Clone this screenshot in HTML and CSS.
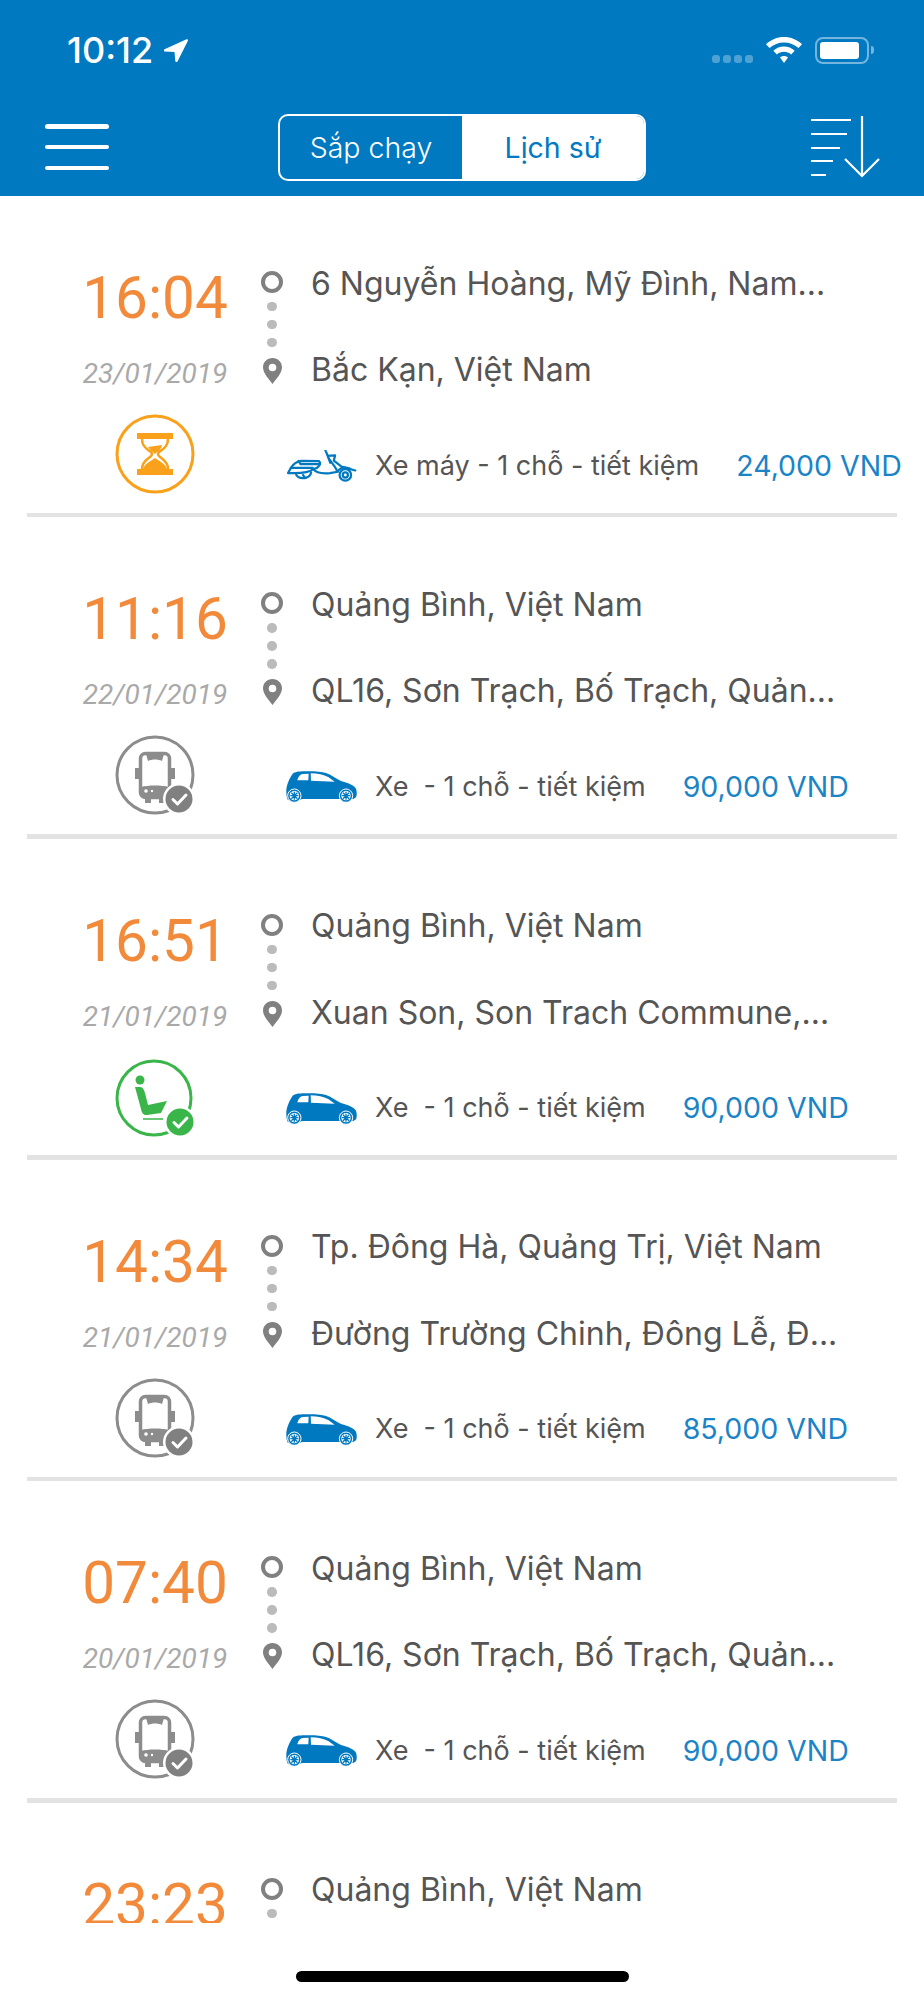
FILE: index.html
```html
<!DOCTYPE html>
<html lang="vi">
<head>
<meta charset="utf-8">
<title>Lịch sử</title>
<link rel="stylesheet" href="styles.css">
</head>
<body>
<svg class="defs" aria-hidden="true">
  <symbol id="pin" viewBox="0 0 19 26"><path fill="#808080" fill-rule="evenodd" d="M9.5 0C4.2 0 0 4 0 9.3 0 15.500 6.200 21.500 9.500 26 12.800 21.500 19 15.500 19 9.300 19 4 14.800 0 9.500 0Zm0 5.700a3.800 3.800 0 1 1 0 7.600 3.800 3.800 0 0 1 0-7.600Z"/></symbol>
  <symbol id="car" viewBox="0 0 213 94">
    <path fill="#0079C1" d="M1 62C0 46 8 25 18 10 24 3 32 1 50 0 80-1 105 0 120 5 135 10 150 22 165 29 185 34 205 42 210 52 213 60 213 72 210 78L202 83H157L150 83H48L42 85H5C2 78 1 70 1 62Z"/>
    <path fill="#fff" d="M34 27C36 18 42 9 50 8L68 7 67 27ZM74 6C95 6 112 10 128 18L146 31 75 28Z"/>
    <g fill="#0079C1" stroke="#fff" stroke-width="3"><circle cx="25" cy="73" r="20"/><circle cx="180" cy="73" r="20"/></g>
    <g fill="#fff"><circle cx="25" cy="73" r="14"/><circle cx="180" cy="73" r="14"/></g>
    <g fill="none" stroke="#0079C1" stroke-width="4"><path d="M25 61V85M13 73H37M16 64 34 82M34 64 16 82"/><path d="M180 61V85M168 73H192M171 64 189 82M189 64 171 82"/></g>
  </symbol>
  <symbol id="scooter" viewBox="0 0 215 100">
    <g fill="none" stroke="#0079C1" stroke-width="7" stroke-linecap="round" stroke-linejoin="round">
      <path d="M3 72 12 56C20 42 30 36 45 34L100 35C107 42 100 56 82 60 70 70 45 74 3 72Z"/>
      <path d="M36 34 42 44H98M12 56H80"/>
      <path d="M28 74C28 92 72 94 75 70"/>
      <path d="M82 60C92 74 112 74 134 72L158 68C148 48 138 38 130 26"/>
      <path d="M120 2 127 18 150 17 146 33 170 52 213 64"/>
      <path d="M127 18 135 40"/>
      <path d="M158 68C162 56 178 52 196 58"/>
      <circle cx="182" cy="78" r="18"/><circle cx="182" cy="78" r="8"/>
      <path d="M50 78 56 88"/>
    </g>
  </symbol>
  <symbol id="status-wait" viewBox="0 0 80 80">
    <circle cx="40" cy="40" r="38" fill="none" stroke="#F9A11B" stroke-width="3"/>
    <path fill="#F9A11B" d="M22 19H58V25H22ZM22 55H58V61H22Z"/>
    <path fill="none" stroke="#F9A11B" stroke-width="2.500" d="M27 25C27 36 37 36 37 40 37 44 27 45 27 55M53 25C53 36 43 36 43 40 43 44 53 45 53 55"/>
    <path fill="#F9A11B" d="M33 33 47 31C46 36 42 38 40 40 38 38 35 36 33 33ZM28 55C30 49 36 47 40 44 44 47 50 49 52 55Z"/>
  </symbol>
  <symbol id="status-bus" viewBox="0 0 80 80">
    <circle cx="40" cy="40" r="38" fill="none" stroke="#8C8C8C" stroke-width="3"/>
    <path fill="#8C8C8C" d="M20 33H24V44H20ZM56 33H60V44H56ZM30 62H36V68H30ZM44 62H50V68H44Z"/>
    <rect x="25.500" y="18.500" width="29" height="44" rx="5" fill="#fff" stroke="#8C8C8C" stroke-width="3.500"/>
    <path fill="#8C8C8C" d="M31 19H49L47 26C43 24 37 24 33 26ZM26 52C33 50 47 50 54 52V62H26Z"/>
    <circle cx="31" cy="56" r="1.800" fill="#fff"/><circle cx="37" cy="56" r="1.200" fill="#fff"/>
    <circle cx="64" cy="64" r="16" fill="#fff"/><circle cx="64" cy="64" r="13.500" fill="#808080"/>
    <path fill="none" stroke="#fff" stroke-width="3" stroke-linecap="round" stroke-linejoin="round" d="M58 64.500 62.500 69 71 60"/>
  </symbol>
  <symbol id="status-seat" viewBox="0 0 80 80">
    <circle cx="39" cy="41" r="37" fill="none" stroke="#39B54A" stroke-width="3"/>
    <circle cx="25" cy="23" r="4.500" fill="#39B54A"/>
    <path fill="#39B54A" d="M20 30H25C28 30 29 33 30 36L33 48 52 44 46 56 32 58C28 58 27 56 26 52Z"/>
    <path fill="none" stroke="#39B54A" stroke-width="1.500" d="M28 62H48"/>
    <circle cx="65" cy="65" r="16" fill="#fff"/><circle cx="65" cy="65" r="13.500" fill="#39B54A"/>
    <path fill="none" stroke="#fff" stroke-width="3" stroke-linecap="round" stroke-linejoin="round" d="M59 65.500 63.500 70 72 61"/>
  </symbol>
</svg>

<div class="phone">
  <header class="appbar">
    <div class="statusbar">
      <div class="clock">
        <span class="clock-time">10:12</span>
        <svg class="clock-arrow" viewBox="0 0 24 23"><path fill="#fff" d="M0 10.500 22 .5C23.500 0 24.300.8 23.800 2L13.500 22.500C12.900 23.500 11.500 23.300 11.300 22L10.500 13 1 12.600C-.2 12.500-.5 11 0 10.500Z"/></svg>
      </div>
      <div class="status-right">
        <div class="signal"><i></i><i></i><i></i><i></i></div>
        <svg class="wifi" viewBox="0 0 36 26"><path fill="#fff" d="M18 0C25 0 31 2.700 36 7.200L32.500 11C28.500 7.400 23.500 5.400 18 5.400S7.500 7.400 3.500 11L0 7.200C5 2.700 11 0 18 0ZM18 9.500C22 9.500 25.800 11 28.700 13.700L25.200 17.500C23.200 15.700 20.700 14.800 18 14.800S12.800 15.700 10.800 17.500L7.300 13.700C10.200 11 14 9.500 18 9.500ZM18 19C19.500 19 20.800 19.500 22 20.500L18 26 14 20.500C15.200 19.500 16.500 19 18 19Z"/></svg>
        <div class="battery"><div class="battery-fill"></div></div>
        <div class="battery-nub"></div>
      </div>
    </div>
    <nav class="toolbar">
      <button class="menu-btn" aria-label="Menu"><i></i><i></i><i></i></button>
      <div class="segment">
        <div class="segment-item">Sắp chạy</div>
        <div class="segment-item active">Lịch sử</div>
      </div>
      <svg class="sort-icon" viewBox="0 0 70 62"><g fill="none" stroke="#fff" stroke-width="2.200"><path d="M0 4H40M0 18H36M0 32H29M0 45H22M0 59H15"/><path d="M51 0V60M34 43 51 60 68 43"/></g></svg>
    </nav>
  </header>

  <main class="trips">
    <article class="trip">
      <div class="when"><div class="time">16:04</div><div class="date">23/01/2019</div><svg class="status"><use href="#status-wait"/></svg></div>
      <div class="detail">
        <div class="stop"><span class="ring"></span><span class="place">6 Nguyễn Hoàng, Mỹ Đình, Nam...</span></div>
        <div class="dots"><i></i><i></i><i></i></div>
        <div class="stop"><svg class="pin"><use href="#pin"/></svg><span class="place">Bắc Kạn, Việt Nam</span></div>
        <div class="meta"><svg class="vehicle"><use href="#scooter"/></svg><span class="kind">Xe máy - 1 chỗ - tiết kiệm</span><span class="price">24,000 VND</span></div>
      </div>
    </article>
    <article class="trip">
      <div class="when"><div class="time">11:16</div><div class="date">22/01/2019</div><svg class="status"><use href="#status-bus"/></svg></div>
      <div class="detail">
        <div class="stop"><span class="ring"></span><span class="place">Quảng Bình, Việt Nam</span></div>
        <div class="dots"><i></i><i></i><i></i></div>
        <div class="stop"><svg class="pin"><use href="#pin"/></svg><span class="place">QL16, Sơn Trạch, Bố Trạch, Quản...</span></div>
        <div class="meta"><svg class="vehicle"><use href="#car"/></svg><span class="kind">Xe &nbsp;- 1 chỗ - tiết kiệm</span><span class="price">90,000 VND</span></div>
      </div>
    </article>
    <article class="trip">
      <div class="when"><div class="time">16:51</div><div class="date">21/01/2019</div><svg class="status"><use href="#status-seat"/></svg></div>
      <div class="detail">
        <div class="stop"><span class="ring"></span><span class="place">Quảng Bình, Việt Nam</span></div>
        <div class="dots"><i></i><i></i><i></i></div>
        <div class="stop"><svg class="pin"><use href="#pin"/></svg><span class="place">Xuan Son, Son Trach Commune,...</span></div>
        <div class="meta"><svg class="vehicle"><use href="#car"/></svg><span class="kind">Xe &nbsp;- 1 chỗ - tiết kiệm</span><span class="price">90,000 VND</span></div>
      </div>
    </article>
    <article class="trip">
      <div class="when"><div class="time">14:34</div><div class="date">21/01/2019</div><svg class="status"><use href="#status-bus"/></svg></div>
      <div class="detail">
        <div class="stop"><span class="ring"></span><span class="place">Tp. Đông Hà, Quảng Trị, Việt Nam</span></div>
        <div class="dots"><i></i><i></i><i></i></div>
        <div class="stop"><svg class="pin"><use href="#pin"/></svg><span class="place">Đường Trường Chinh, Đông Lễ, Đ...</span></div>
        <div class="meta"><svg class="vehicle"><use href="#car"/></svg><span class="kind">Xe &nbsp;- 1 chỗ - tiết kiệm</span><span class="price">85,000 VND</span></div>
      </div>
    </article>
    <article class="trip">
      <div class="when"><div class="time">07:40</div><div class="date">20/01/2019</div><svg class="status"><use href="#status-bus"/></svg></div>
      <div class="detail">
        <div class="stop"><span class="ring"></span><span class="place">Quảng Bình, Việt Nam</span></div>
        <div class="dots"><i></i><i></i><i></i></div>
        <div class="stop"><svg class="pin"><use href="#pin"/></svg><span class="place">QL16, Sơn Trạch, Bố Trạch, Quản...</span></div>
        <div class="meta"><svg class="vehicle"><use href="#car"/></svg><span class="kind">Xe &nbsp;- 1 chỗ - tiết kiệm</span><span class="price">90,000 VND</span></div>
      </div>
    </article>
    <article class="trip">
      <div class="when"><div class="time">23:23</div></div>
      <div class="detail">
        <div class="stop"><span class="ring"></span><span class="place">Quảng Bình, Việt Nam</span></div>
        <div class="dots"><i></i><i></i><i></i></div>
      </div>
    </article>
  </main>

  <footer class="home-area"><div class="home-indicator"></div></footer>
</div>
</body>
</html>
```

FILE: styles.css
```css
* { box-sizing: border-box; }
html, body { margin: 0; padding: 0; background: #fff; }
body { font-family: Inter, "Liberation Sans", sans-serif; }
.defs { display: none; }

.phone {
  width: 924px;
  height: 2000px;
  display: flex;
  flex-direction: column;
  overflow: hidden;
  background: #fff;
}

/* App bar */
.appbar {
  flex: none;
  height: 196px;
  background: #0079C1;
  color: #fff;
  padding-top: 30px;
}
.statusbar {
  height: 40px;
  display: flex;
  justify-content: space-between;
  align-items: center;
  padding: 0 50px 0 67px;
}
.clock { display: flex; align-items: center; gap: 11px; }
.clock-time { font-size: 36px; font-weight: 500; letter-spacing: 0; line-height: 40px; }
.clock-arrow { width: 24px; height: 23px; }
.status-right { display: flex; align-items: center; }
.signal { display: flex; gap: 3px; margin: 0 13px 0 0; padding-top: 18px; }
.signal i { width: 8px; height: 8px; border-radius: 3px; background: rgba(255, 255, 255, .3); }
.wifi { width: 36px; height: 26px; margin-right: 13px; }
.battery {
  width: 54px;
  height: 27px;
  border: 2px solid rgba(255, 255, 255, .45);
  border-radius: 8px;
  padding: 3px;
}
.battery-fill { width: 39px; height: 17px; background: #fff; border-radius: 3px; }
.battery-nub { width: 3px; height: 8px; margin-left: 2px; background: rgba(255, 255, 255, .45); border-radius: 0 3px 3px 0; }

.toolbar {
  height: 66px;
  margin-top: 44px;
  display: flex;
  align-items: center;
  padding: 0 45px;
  justify-content: space-between;
}
.menu-btn {
  width: 64px;
  height: 46px;
  padding: 0;
  border: 0;
  background: none;
  display: flex;
  flex-direction: column;
  justify-content: space-between;
}
.menu-btn i { display: block; height: 4.500px; border-radius: 3px; background: #fff; }
.segment {
  width: 368px;
  height: 67px;
  display: flex;
  border: 2px solid #fff;
  border-radius: 10px;
  overflow: hidden;
  margin-left: 4px;
}
.segment-item {
  flex: 1;
  display: flex;
  align-items: center;
  justify-content: center;
  font-size: 28.500px;
  font-weight: 300;
}
.segment-item.active { background: #fff; color: #0079C1; font-weight: 400; }
.sort-icon { width: 70px; height: 62px; margin-right: -2px; }

/* Trip list */
.trips { flex: 1; min-height: 0; overflow: hidden; }
.trip {
  height: 321.33px;
  display: flex;
  padding-left: 60px;
  position: relative;
}
.trip::after {
  content: "";
  position: absolute;
  left: 27px;
  right: 27px;
  bottom: 0;
  height: 4.500px;
  background: #E3E3E3;
}
.when {
  width: 190px;
  flex: none;
  padding-top: 72px;
  display: flex;
  flex-direction: column;
  align-items: center;
}
.time {
  font-family: Roboto, sans-serif;
  font-size: 58.500px;
  line-height: 60px;
  color: #F28A3C;
}
.date {
  font-family: Roboto, sans-serif;
  font-style: italic;
  font-size: 28px;
  line-height: 32px;
  margin-top: 30px;
  color: #A9A9A9;
}
.status { width: 80px; height: 80px; margin-top: 24px; }

.detail { flex: 1; min-width: 0; padding-top: 66px; }
.stop { height: 40px; display: flex; align-items: center; position: relative; }
.ring, .pin { flex: none; }
.ring {
  width: 22px;
  height: 22px;
  border: 4.500px solid #808080;
  border-radius: 50%;
  margin: 0 28px 0 11px;
}
.pin { width: 19px; height: 26px; margin: 0 29px 0 13px; }
.place {
  font-size: 32px;
  line-height: 40px;
  color: #555;
  white-space: nowrap;
}
.stop:first-child .place { margin-top: 3px; }
.dots + .stop .place { margin-top: -2px; }
.dots {
  height: 49px;
  width: 44px;
  display: flex;
  flex-direction: column;
  align-items: center;
  gap: 8.600px;
}
.dots i { width: 9.400px; height: 9.400px; border-radius: 50%; background: #BBB; }

.meta {
  display: flex;
  align-items: center;
  height: 40px;
  margin-top: 54px;
  padding-left: 36px;
  white-space: nowrap;
}
.vehicle { width: 71px; height: 32px; flex: none; margin: 2px 18px 0 0; }
.kind { font-size: 27px; color: #555; }
.price { font-size: 28.500px; color: #1A84C6; margin-left: 37px; }

/* Home indicator */
.home-area { flex: none; height: 77px; padding-top: 48px; display: flex; justify-content: center; }
.home-indicator { width: 333px; height: 11px; border-radius: 6px; background: #000; }
```
